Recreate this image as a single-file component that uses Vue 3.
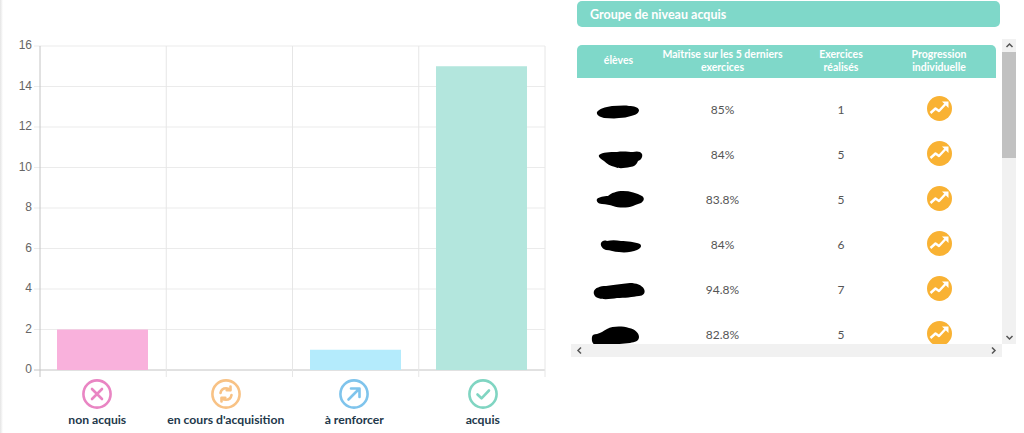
<script setup>
const yTicks = [0, 2, 4, 6, 8, 10, 12, 14, 16];
const xLines = [40, 166.25, 292.5, 418.75, 545];

const PLOT_TOP = 46;
const PLOT_BOTTOM = 370;
const yFor = (v) => PLOT_BOTTOM - (v / 16) * (PLOT_BOTTOM - PLOT_TOP);

const bars = [
  { x: 57, value: 2, color: '#f9b1dc' },
  { x: 310, value: 1, color: '#b4ebfc' },
  { x: 436, value: 15, color: '#b3e6dd' },
];

const legend = [
  { label: 'non acquis', kind: 'cross', color: '#e985c3' },
  { label: "en cours d'acquisition", kind: 'refresh', color: '#f8c285' },
  { label: 'à renforcer', kind: 'arrow', color: '#7fc4ec' },
  { label: 'acquis', kind: 'check', color: '#80d5c2' },
];

// les noms sont masqués au feutre noir sur la capture
const rows = [
  { blob: 'M20 24c2-3 8-5 15-6 6 0 12-1 17 0 5 0 9 1 10 4 0 3-3 5-8 6-4 1-7 2-12 2-5 1-10 0-15 0-4-1-8-3-7-6z', score: '85%', done: 1 },
  { blob: 'M22 22c4-3 10-3 18-3 6-1 12 0 16 0 3-1 8-1 9 2 1 3-1 6-4 7-1 3-4 6-8 6-5 1-11 2-15 0-5-1-8-3-11-6-3-2-6-4-5-6z', score: '84%', done: 5 },
  { blob: 'M20 21c2-2 7-3 11-3 3-3 9-5 15-5 7 0 14 2 19 5 3 2 2 5-1 7-3 1-6 2-8 3-6 2-14 2-20 0-3-1-7-2-11-2-4 0-6-3-5-5z', score: '83.8%', done: 5 },
  { blob: 'M24 20c1-2 3-3 6-2 4-1 9-1 14 0 6 0 14 1 19 3 2 2 1 4-3 6-5 2-12 3-18 2-5 0-9-2-13-2-3-1-6-4-5-7z', score: '84%', done: 6 },
  { blob: 'M17 23c1-3 6-5 12-5 7-1 15-2 24-3 6 0 12 2 14 6 2 4-1 7-5 7-6 1-15 2-22 2-6 1-14 2-19 0-3-1-5-4-4-7z', score: '94.8%', done: 7 },
  { blob: 'M15 24c0-2 2-3 5-3 4-1 6-3 10-5 6-3 15-3 22-1 6 1 10 5 10 9 0 4-4 5-9 6-7 1-14 1-21 1-4 0-7 0-10 1-4 1-8-1-7-8z', score: '82.8%', done: 5 },
];
</script>

<template>
  <div class="page">
    <section class="left">
      <svg class="chart" width="577" height="377" viewBox="0 0 577 377">
        <line
          v-for="t in yTicks"
          :key="'h' + t"
          x1="34"
          x2="545"
          :y1="yFor(t)"
          :y2="yFor(t)"
          :stroke="t === 0 ? '#c4c4c4' : '#ebebeb'"
        />
        <line
          v-for="(x, i) in xLines"
          :key="'v' + x"
          :x1="x"
          :x2="x"
          y1="46"
          y2="377"
          :stroke="i === 0 ? '#c4c4c4' : '#e6e6e6'"
        />
        <rect
          v-for="b in bars"
          :key="b.x"
          :x="b.x"
          :y="yFor(b.value)"
          width="91"
          :height="PLOT_BOTTOM - yFor(b.value)"
          :fill="b.color"
        />
        <text
          v-for="t in yTicks"
          :key="'l' + t"
          class="tick"
          x="32"
          :y="yFor(t) + 3"
          text-anchor="end"
        >{{ t }}</text>
      </svg>

      <div class="legend">
        <div v-for="item in legend" :key="item.kind" class="legend-item">
          <svg width="30" height="30" viewBox="0 0 30 30" fill="none" :stroke="item.color" stroke-width="2.6" stroke-linecap="round" stroke-linejoin="round">
            <circle cx="15" cy="15" r="13.6" />
            <path v-if="item.kind === 'cross'" d="M10 10l10 10M20 10L10 20" />
            <g v-else-if="item.kind === 'refresh'" stroke-width="2.6">
              <path d="M9.500 14c.5-2.800 2.800-4.800 5.600-4.800 1.500 0 2.800.6 3.900 1.600" />
              <path d="M19.500 7.500v3.800h-3.800" />
              <path d="M20.500 16c-.5 2.800-2.800 4.800-5.600 4.800-1.500 0-2.800-.6-3.900-1.600" />
              <path d="M10.500 22.500v-3.800h3.800" />
            </g>
            <path v-else-if="item.kind === 'arrow'" d="M9.500 20.500L20 10M12 9.500h8.500V18" />
            <path v-else d="M9.500 15.500l4 3.800 7.500-7.800" />
          </svg>
          <span class="legend-label">{{ item.label }}</span>
        </div>
      </div>
    </section>

    <section class="right">
      <h2 class="group-title">Groupe de niveau acquis</h2>

      <div class="table-wrap">
        <div class="viewport">
          <div class="table-head grid">
            <div>élèves</div>
            <div>Maîtrise sur les 5 derniers exercices</div>
            <div>Exercices<br />réalisés</div>
            <div>Progression<br />individuelle</div>
          </div>

          <div v-for="(row, i) in rows" :key="i" class="row grid">
            <svg class="blob" width="83" height="45" viewBox="0 0 83 45">
              <path :d="row.blob" fill="#000" />
            </svg>
            <div class="cell">{{ row.score }}</div>
            <div class="cell">{{ row.done }}</div>
            <div class="trend-cell">
              <svg width="25" height="25" viewBox="0 0 25 25">
                <circle cx="12.500" cy="12.500" r="12.500" fill="#f9b233" />
                <path d="M3.500 17l5-4.500 3.500 2.500 6.500-7" fill="none" stroke="#fff" stroke-width="2.400" stroke-linejoin="round" />
                <path d="M15 5.500h6.500V12z" fill="#fff" />
              </svg>
            </div>
          </div>
        </div>

        <div class="vbar">
          <svg class="arrow" width="15" height="13" viewBox="0 0 15 13"><path d="M4.500 8l3-3 3 3" fill="none" stroke="#555" stroke-width="1.500" /></svg>
          <div class="vtrack"><div class="vthumb"></div></div>
          <svg class="arrow" width="15" height="13" viewBox="0 0 15 13"><path d="M4.500 5l3 3 3-3" fill="none" stroke="#555" stroke-width="1.500" /></svg>
        </div>

        <div class="hbar">
          <svg width="13" height="13" viewBox="0 0 13 13"><path d="M8 3.500l-3 3 3 3" fill="none" stroke="#555" stroke-width="1.500" /></svg>
          <svg width="13" height="13" viewBox="0 0 13 13"><path d="M5 3.500l3 3-3 3" fill="none" stroke="#555" stroke-width="1.500" /></svg>
        </div>
      </div>
    </section>
  </div>
</template>

<style>
html,
body {
  margin: 0;
  background: #fff;
}
</style>

<style scoped>
.page {
  width: 1024px;
  height: 433px;
  display: flex;
  overflow: hidden;
  background: linear-gradient(to right, #e4e4e4, #fff 3px);
  font-family: Lato, "Noto Sans", sans-serif;
}

.left {
  width: 577px;
  flex: none;
}

.chart {
  display: block;
}

.tick {
  font: 12px "Liberation Sans", Arial, sans-serif;
  fill: #666;
}

.legend {
  display: grid;
  grid-template-columns: repeat(4, 128.500px);
  margin: 2px 0 0 33px;
}

.legend-item {
  display: flex;
  flex-direction: column;
  align-items: center;
  gap: 3px;
}

.legend-label {
  font-size: 12.200px;
  line-height: 16px;
  font-weight: 700;
  color: #22384a;
  white-space: nowrap;
}

.right {
  flex: 1;
  padding-top: 1px;
}

.group-title {
  width: 423px;
  height: 26px;
  margin: 0;
  padding-left: 13px;
  box-sizing: border-box;
  background: #7fd8c9;
  border-radius: 5px;
  color: #fff;
  font-size: 12.500px;
  font-weight: 700;
  line-height: 27px;
}

.table-wrap {
  display: grid;
  grid-template-columns: 425px 14px;
  margin-top: 12px;
}

.viewport {
  height: 305px;
  padding-top: 5.500px;
  box-sizing: border-box;
  overflow: hidden;
}

.grid {
  display: grid;
  grid-template-columns: 83px 125px 112px 84px 15px;
  width: 419px;
  align-items: center;
  text-align: center;
}

.table-head {
  height: 33px;
  margin-bottom: 10.500px;
  background: #7fd8c9;
  border-radius: 5px 5px 0 0;
  color: #fff;
  font-size: 10.500px;
  font-weight: 700;
  line-height: 13.500px;
}

.row {
  height: 45px;
  font-size: 12px;
  color: #555;
}

.cell {
  padding-bottom: 2px;
}

.blob {
  display: block;
}

.trend-cell {
  display: flex;
  justify-content: center;
  margin-top: -4px;
}

.trend-cell svg {
  display: block;
}

.vbar {
  height: 305px;
  display: flex;
  flex-direction: column;
  background: #f1f1f1;
}

.arrow {
  display: block;
  flex: none;
}

.vtrack {
  flex: 1;
}

.vthumb {
  height: 106px;
  background: #c1c1c1;
}

.hbar {
  grid-column: 1;
  width: 431px;
  height: 13px;
  margin-left: -6px;
  display: flex;
  justify-content: space-between;
  padding: 0 2px;
  box-sizing: border-box;
  background: #f1f1f1;
}
</style>
